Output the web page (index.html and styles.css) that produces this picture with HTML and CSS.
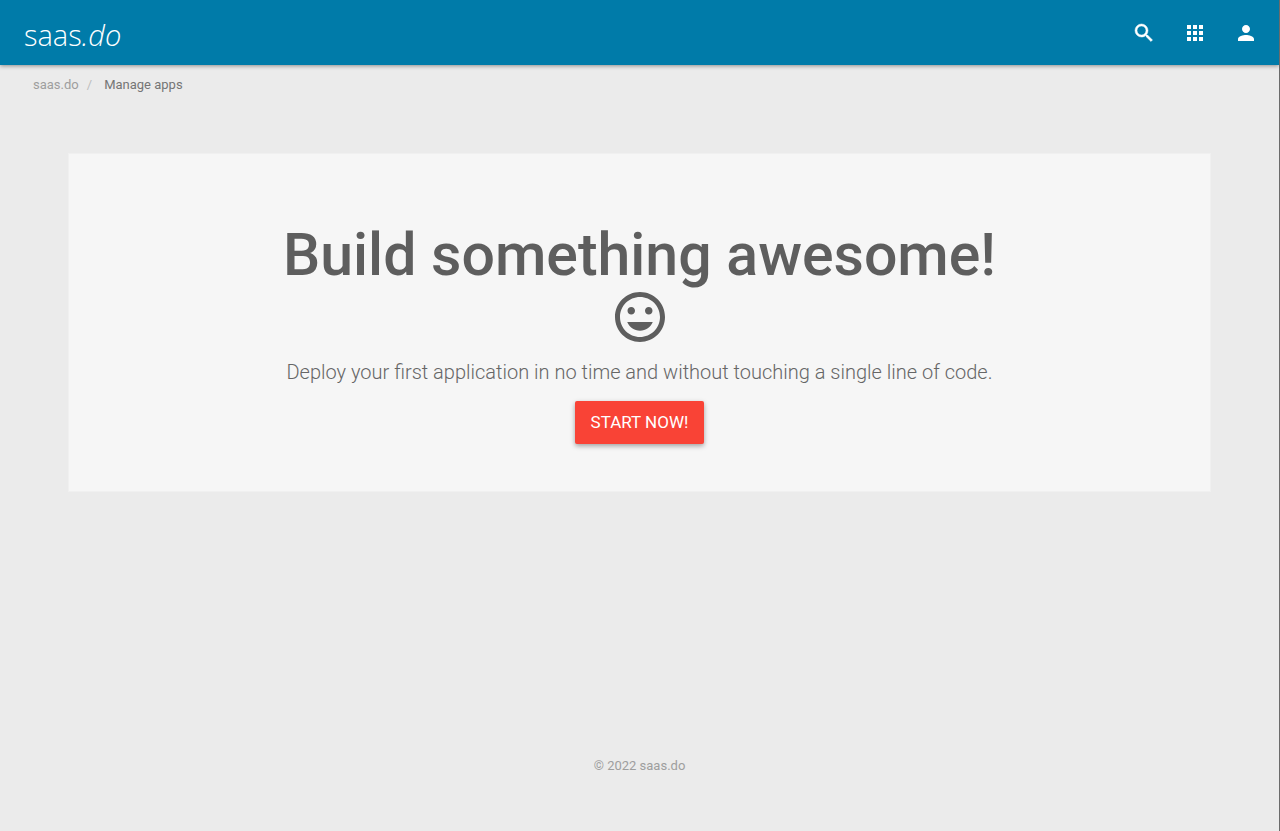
FILE: index.html
```html
<!DOCTYPE html>
<html lang="en">
<head>
    <meta charset="utf-8">
    <meta name="viewport" content="width=device-width, initial-scale=1">
    <title>Manage apps - saas.do</title>
    <link rel="stylesheet" href="styles.css">
</head>
<body>
<header class="navbar">
    <a class="logo" href="#">saas<em>.do</em></a>
    <nav class="nav-actions">
        <button class="icon-btn icon-search" type="button" aria-label="Search">
            <svg viewBox="0 0 24 24"><path d="M15.5 14h-.79l-.28-.27A6.47 6.47 0 0 0 16 9.5 6.5 6.5 0 1 0 9.5 16c1.61 0 3.09-.59 4.23-1.57l.27.28v.79l5 4.99L20.49 19l-4.99-5zm-6 0C7.01 14 5 11.99 5 9.5S7.01 5 9.5 5 14 7.01 14 9.5 11.99 14 9.5 14z"/></svg>
        </button>
        <button class="icon-btn" type="button" aria-label="Apps">
            <svg viewBox="0 0 24 24"><path d="M4 8h4V4H4v4zm6 12h4v-4h-4v4zm-6 0h4v-4H4v4zm0-6h4v-4H4v4zm6 0h4v-4h-4v4zm6-10v4h4V4h-4zm-6 4h4V4h-4v4zm6 6h4v-4h-4v4zm0 6h4v-4h-4v4z"/></svg>
        </button>
        <button class="icon-btn" type="button" aria-label="Account">
            <svg viewBox="0 0 24 24"><path d="M12 12c2.21 0 4-1.79 4-4s-1.79-4-4-4-4 1.79-4 4 1.79 4 4 4zm0 2c-2.67 0-8 1.34-8 4v2h16v-2c0-2.66-5.33-4-8-4z"/></svg>
        </button>
    </nav>
</header>

<nav aria-label="Breadcrumb">
    <ol class="breadcrumb">
        <li><a href="#">saas.do</a></li>
        <li class="active">Manage apps</li>
    </ol>
</nav>

<main class="content">
    <section class="jumbotron">
        <h1>Build something awesome!</h1>
        <svg class="mood" viewBox="0 0 24 24" aria-hidden="true"><path d="M11.99 2C6.47 2 2 6.48 2 12s4.47 10 9.99 10C17.52 22 22 17.52 22 12S17.52 2 11.99 2zM12 20c-4.42 0-8-3.58-8-8s3.58-8 8-8 8 3.58 8 8-3.58 8-8 8zm3.5-9c.83 0 1.5-.67 1.5-1.5S16.33 8 15.5 8 14 8.67 14 9.5s.67 1.5 1.5 1.5zm-7 0c.83 0 1.5-.67 1.5-1.5S9.33 8 8.5 8 7 8.67 7 9.5 7.67 11 8.5 11zm3.5 6.5c2.33 0 4.31-1.46 5.11-3.5H6.89c.8 2.04 2.78 3.5 5.11 3.5z"/></svg>
        <p>Deploy your first application in no time and without touching a single line of code.</p>
        <button class="btn-start" type="button">START NOW!</button>
    </section>
</main>

<footer class="footer">© 2022 saas.do</footer>
</body>
</html>
```

FILE: styles.css
```css
*{box-sizing: border-box;}
body {
    display: flex; flex-direction: column;
    min-height: 100vh; margin: 0;
    background: #ebebeb; color: #5e5e5e;
    border-right: 1px solid #6b6b6b;
    font-family: Roboto, "Liberation Sans", sans-serif;
    font-size: 13px; line-height: 20px;
}
a{text-decoration: none;}
button{border: 0; font-family: inherit; cursor: pointer;}

/* top bar */
.navbar {
    display: flex; align-items: center; justify-content: space-between;
    height: 65px; padding: 0 18px 0 24px;
    background: #007ba9;
    box-shadow: 0 1px 4px rgba(0,0,0,.4);
}
.logo {
    padding-top: 4px;
    color: #fff;
    font-family: "Open Sans", sans-serif; font-size: 29px; font-weight: 300; line-height: 40px;
}
.nav-actions{display: flex; gap: 21px;}
.icon-btn{display: flex; padding: 3px; background: none;}
.icon-btn svg{width: 24px; height: 24px; fill: #fff;}
.icon-search svg{stroke: #fff; stroke-width: .5;}

.breadcrumb {
    display: flex; list-style: none;
    margin: 0; padding: 10px 33px;
}
.breadcrumb a{color: #9e9e9e;}
.breadcrumb .active{color: #757575;}
.breadcrumb li + li::before{content: "/"; padding: 0 12px 0 8px; color: #bdbdbd;}

/* welcome panel */
.content{flex: 1; padding: 48px 68px;}
.jumbotron {
    display: flex; flex-direction: column; align-items: center;
    padding: 69px 60px 47px;
    background: #f6f6f6;
    border: 1px solid #f0f0f0;
    text-align: center;
}
.jumbotron h1{margin: 0; font-size: 59px; font-weight: 500; line-height: 64px;}
.mood{width: 60px; height: 60px; fill: #5e5e5e;}
.jumbotron p{margin: 11px 0 15px; color: #666; font-size: 20px; font-weight: 300; line-height: 28px;}
.btn-start {
    padding: 11px 16px;
    background: #f94336; color: #fff;
    border-radius: 2px;
    box-shadow: 0 2px 5px rgba(0,0,0,.35);
    font-size: 17px; line-height: 21px;
}

.footer{padding: 0 20px 55px; color: #9e9e9e; text-align: center;}
```
